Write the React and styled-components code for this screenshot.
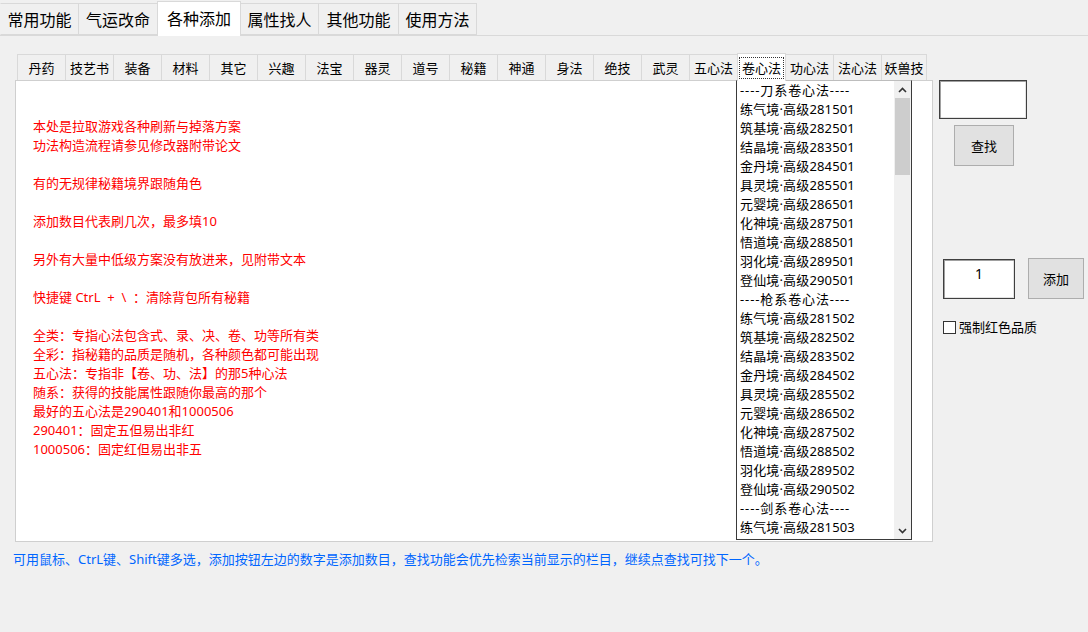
import React from "react";
import styled, { createGlobalStyle } from "styled-components";

const GlobalStyle = createGlobalStyle`
  html, body {
    margin: 0;
    padding: 0;
    background: #f0f0f0;
  }
  body {
    font-family: "Noto Sans", "Noto Sans CJK SC", sans-serif;
    font-size: 13px;
    color: #000;
  }
`;

const topTabs = [
  { label: "常用功能", w: 79 },
  { label: "气运改命", w: 80 },
  { label: "各种添加", w: 84, active: true },
  { label: "属性找人", w: 79 },
  { label: "其他功能", w: 81 },
  { label: "使用方法", w: 79 }
];

const innerTabs = [
  "丹药", "技艺书", "装备", "材料", "其它", "兴趣", "法宝", "器灵", "道号",
  "秘籍", "神通", "身法", "绝技", "武灵", "五心法", "卷心法", "功心法", "法心法", "妖兽技"
];

const notes = [
  "本处是拉取游戏各种刷新与掉落方案",
  "功法构造流程请参见修改器附带论文",
  "",
  "有的无规律秘籍境界跟随角色",
  "",
  "添加数目代表刷几次，最多填10",
  "",
  "另外有大量中低级方案没有放进来，见附带文本",
  "",
  "快捷键 CtrL  +  \\  ：清除背包所有秘籍",
  "",
  "全类：专指心法包含式、录、决、卷、功等所有类",
  "全彩：指秘籍的品质是随机，各种颜色都可能出现",
  "五心法：专指非【卷、功、法】的那5种心法",
  "随系：获得的技能属性跟随你最高的那个",
  "最好的五心法是290401和1000506",
  "290401：固定五但易出非红",
  "1000506：固定红但易出非五"
];

const realms = ["练气", "筑基", "结晶", "金丹", "具灵", "元婴", "化神", "悟道", "羽化", "登仙"];
const schools = ["刀", "枪", "剑"];

// only the rows that show in the list's window
const listItems = [];
schools.forEach((s, si) => {
  listItems.push({ text: `----${s}系卷心法----`, header: true });
  realms.forEach((r, ri) => {
    listItems.push({ text: `${r}境·高级${281 + ri}50${si + 1}` });
  });
});
listItems.length = 24;

const Window = styled.div`
  width: 1088px;
  height: 632px;
  background: #f0f0f0;
  overflow: hidden;
`;

const TopBar = styled.div`
  display: flex;
  align-items: flex-end;
  height: 35px;
  border-bottom: 1px solid #d9d9d9;
`;

const TopTab = styled.div`
  box-sizing: border-box;
  position: relative;
  z-index: ${p => (p.$active ? 1 : 0)};
  width: ${p => p.$w}px;
  height: ${p => (p.$active ? 35 : 32)}px;
  margin-left: -1px;
  margin-bottom: ${p => (p.$active ? -1 : 0)}px;
  padding-bottom: ${p => (p.$active ? 2 : 0)}px;
  background: ${p => (p.$active ? "#fff" : "#f0f0f0")};
  border: 1px solid #d9d9d9;
  border-bottom: ${p => (p.$active ? "none" : "1px solid #d9d9d9")};
  display: flex;
  align-items: center;
  justify-content: center;
  font-size: 16px;
  &:first-child {
    margin-left: 0;
    border-left-color: transparent;
  }
`;

const Page = styled.div`
  padding-left: 15px;
`;

const InnerTabBar = styled.div`
  display: flex;
  align-items: flex-end;
  height: 44px;
  padding-left: 2px;
`;

const InnerTab = styled.div`
  box-sizing: border-box;
  position: relative;
  z-index: ${p => (p.$active ? 1 : 0)};
  width: ${p => (p.$last ? 46 : 49)}px;
  height: ${p => (p.$active ? 28 : 26)}px;
  margin-left: -1px;
  margin-bottom: ${p => (p.$active ? -1 : 0)}px;
  background: ${p => (p.$active ? "#fff" : "#f0f0f0")};
  border: 1px solid #d9d9d9;
  border-bottom: none;
  display: flex;
  align-items: center;
  justify-content: center;
  padding-top: ${p => (p.$active ? 1 : 0)}px;
  line-height: 20px;
  &:first-child {
    margin-left: 0;
  }
`;

const FocusRect = styled.span`
  box-sizing: border-box;
  display: flex;
  align-items: center;
  justify-content: center;
  width: 45px;
  height: 22px;
  outline: 1px dotted #333;
  outline-offset: -1px;
`;

const Row = styled.div`
  display: flex;
  align-items: flex-start;
`;

const Panel = styled.div`
  box-sizing: border-box;
  width: 918px;
  height: 462px;
  border: 1px solid #cfcfcf;
  background: #fff;
  display: flex;
  align-items: flex-start;
`;

const Notes = styled.div`
  width: 720px;
  box-sizing: border-box;
  padding: 36px 0 0 17px;
  color: #ff0000;
  line-height: 19px;
`;

const NoteLine = styled.div`
  height: 19px;
  white-space: pre;
`;

const ListBox = styled.div`
  box-sizing: border-box;
  width: 176px;
  height: 460px;
  margin-top: -1px;
  border: 1px solid #3a3a3a;
  border-top-color: #bdbdbd;
  background: #fff;
  display: flex;
`;

const Items = styled.div`
  flex: 1;
  overflow: hidden;
  padding-left: 3px;
`;

const Item = styled.div`
  height: 19px;
  line-height: 19px;
  white-space: nowrap;
  letter-spacing: ${p => (p.$header ? "0.9px" : "0.15px")};
`;

const ScrollBar = styled.div`
  width: 17px;
  background: #f0f0f0;
  display: flex;
  flex-direction: column;
`;

const Arrow = styled.div`
  height: 17px;
  display: flex;
  align-items: center;
  justify-content: center;
`;

const Track = styled.div`
  flex: 1;
  padding: 0 1px;
`;

const Thumb = styled.div`
  height: 77px;
  background: #cdcdcd;
`;

const Side = styled.div`
  display: flex;
  flex-direction: column;
  align-items: flex-start;
`;

const SunkenInput = styled.div`
  box-sizing: border-box;
  width: ${p => p.$w}px;
  height: ${p => p.$h}px;
  margin-left: ${p => p.$ml}px;
  background: #fff;
  border: 1px solid #3f3f3f;
  box-shadow: inset 1px 1px 0 #a0a0a0, inset -1px -1px 0 #e3e3e3;
  text-align: center;
  padding-top: 5px;
  line-height: 18px;
  font-size: 14px;
`;

const Button = styled.div`
  box-sizing: border-box;
  width: ${p => p.$w}px;
  height: 41px;
  background: #e1e1e1;
  border: 1px solid #adadad;
  display: flex;
  align-items: center;
  justify-content: center;
`;

const FindButton = styled(Button)`
  margin: 6px 0 0 21px;
`;

const AddRow = styled.div`
  display: flex;
  align-items: flex-start;
  margin-top: 93px;
  padding-left: 10px;
`;

const AddButton = styled(Button)`
  margin: -1px 0 0 13px;
`;

const CheckRow = styled.label`
  display: flex;
  align-items: center;
  margin-top: 20px;
  padding-left: 10px;
  line-height: 16px;
`;

const CheckBox = styled.span`
  box-sizing: border-box;
  width: 13px;
  height: 13px;
  border: 1px solid #333;
  background: #fff;
  margin-right: 3px;
`;

const Hint = styled.div`
  margin: 8px 0 0 -2px;
  color: #0066ff;
  line-height: 19px;
  white-space: nowrap;
`;

const Chevron = ({ down }) => (
  <svg width="9" height="6" viewBox="0 0 9 6">
    <path
      d={down ? "M1 1 L4.5 4.5 L8 1" : "M1 5 L4.5 1.5 L8 5"}
      fill="none"
      stroke="#333"
      strokeWidth="1.6"
    />
  </svg>
);

export default function App() {
  return (
    <Window>
      <GlobalStyle />
      <TopBar>
        {topTabs.map(t => (
          <TopTab key={t.label} $w={t.w} $active={t.active}>
            {t.label}
          </TopTab>
        ))}
      </TopBar>
      <Page>
        <InnerTabBar>
          {innerTabs.map((t, i) => {
            const active = t === "卷心法";
            return (
              <InnerTab key={t} $active={active} $last={i === innerTabs.length - 1}>
                {active ? <FocusRect>{t}</FocusRect> : t}
              </InnerTab>
            );
          })}
        </InnerTabBar>
        <Row>
          <Panel>
            <Notes>
              {notes.map((n, i) => (
                <NoteLine key={i}>{n}</NoteLine>
              ))}
            </Notes>
            <ListBox>
              <Items>
                {listItems.map((it, i) => (
                  <Item key={i} $header={it.header}>
                    {it.text}
                  </Item>
                ))}
              </Items>
              <ScrollBar>
                <Arrow>
                  <Chevron />
                </Arrow>
                <Track>
                  <Thumb />
                </Track>
                <Arrow>
                  <Chevron down />
                </Arrow>
              </ScrollBar>
            </ListBox>
          </Panel>
          <Side>
            <SunkenInput $w={88} $h={39} $ml={6} />
            <FindButton $w={60}>查找</FindButton>
            <AddRow>
              <SunkenInput $w={72} $h={40} $ml={0}>1</SunkenInput>
              <AddButton $w={56}>添加</AddButton>
            </AddRow>
            <CheckRow>
              <CheckBox />
              强制红色品质
            </CheckRow>
          </Side>
        </Row>
        <Hint>
          可用鼠标、CtrL键、Shift键多选，添加按钮左边的数字是添加数目，查找功能会优先检索当前显示的栏目，继续点查找可找下一个。
        </Hint>
      </Page>
    </Window>
  );
}
